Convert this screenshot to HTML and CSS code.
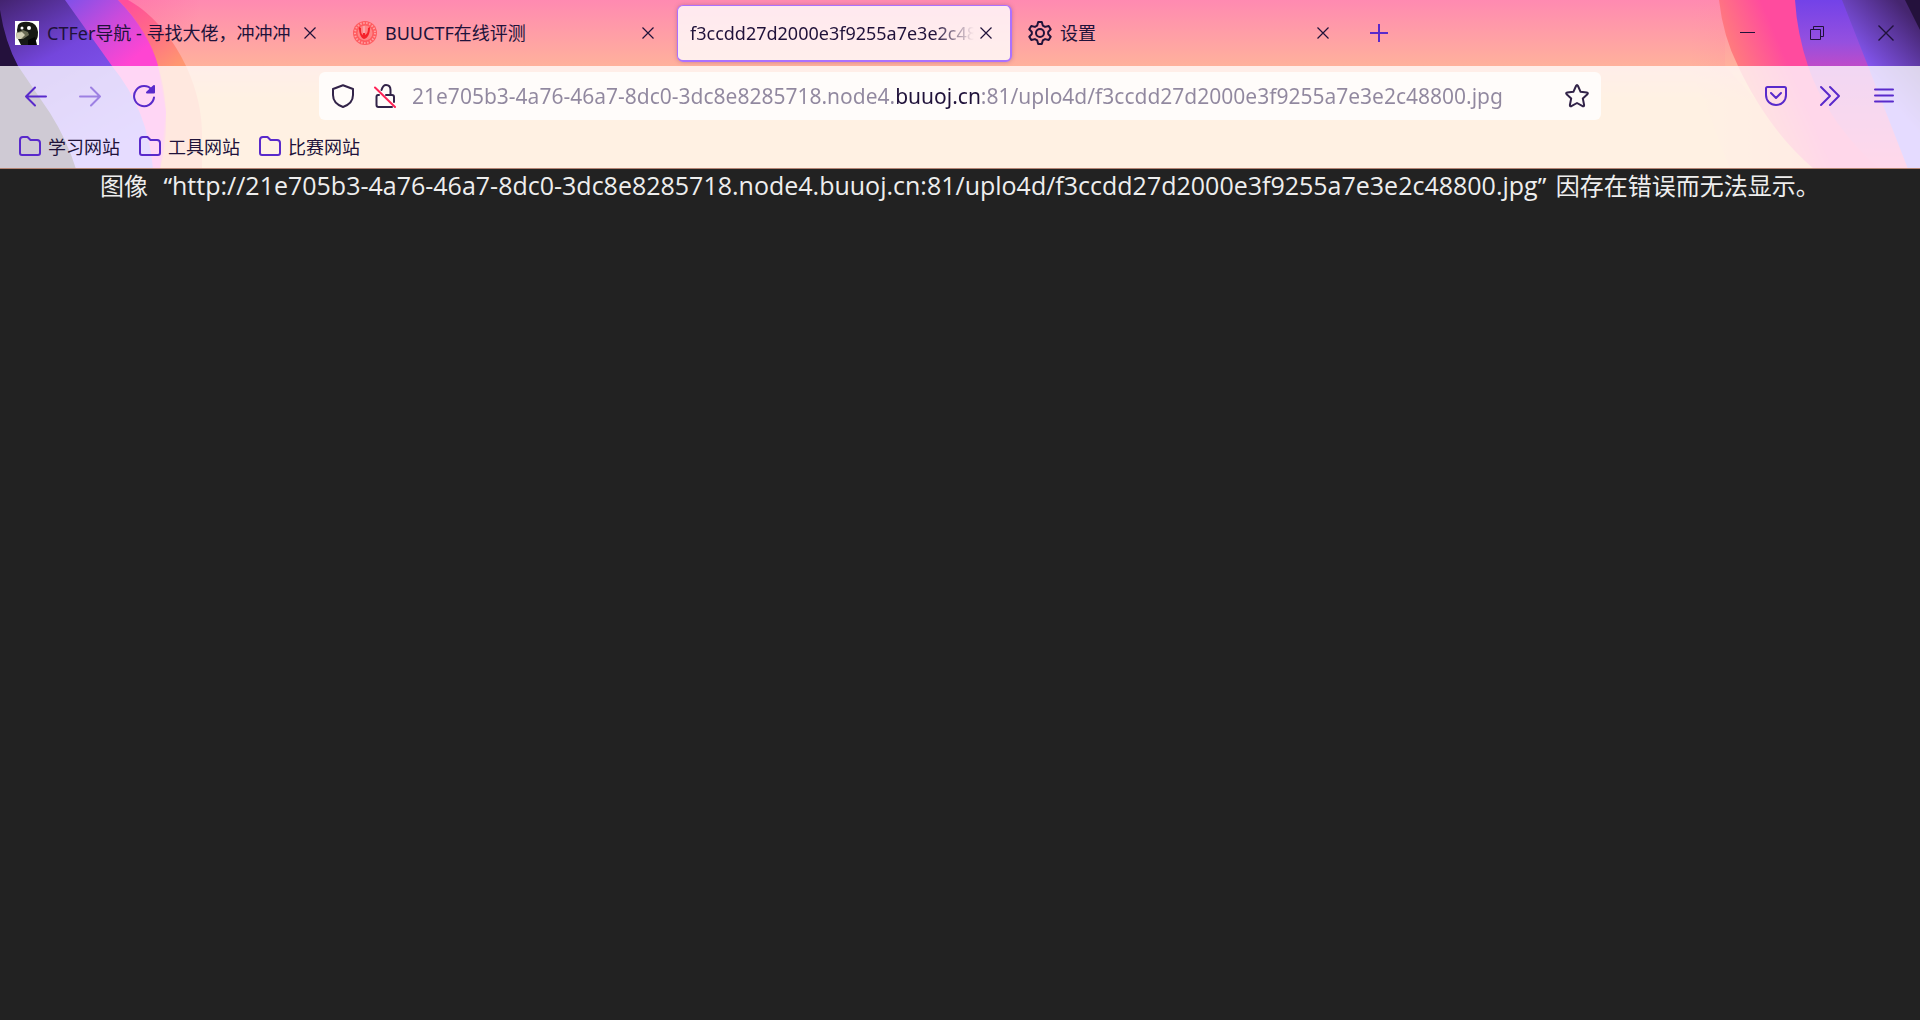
FILE: index.html
```html
<!DOCTYPE html>
<html lang="zh-CN">
<head>
<meta charset="utf-8">
<title>f3ccdd27d2000e3f9255a7e3e2c48800.jpg</title>
<link rel="stylesheet" href="styles.css">
</head>
<body>
<header class="chrome">
  <svg class="art art-left" viewBox="0 0 280 169" aria-hidden="true">
    <defs>
      <linearGradient id="lv" x1="0" y1="0" x2=".5" y2="1"><stop offset="0" stop-color="#43236f"/><stop offset=".4" stop-color="#7446dc"/><stop offset="1" stop-color="#8c62ff"/></linearGradient>
      <linearGradient id="lm" gradientUnits="userSpaceOnUse" x1="70" y1="0" x2="125" y2="66"><stop offset="0" stop-color="#8450e8"/><stop offset=".5" stop-color="#c94bdc"/><stop offset="1" stop-color="#ff45d2"/></linearGradient>
      <linearGradient id="lo" gradientUnits="userSpaceOnUse" x1="130" y1="0" x2="175" y2="66"><stop offset="0" stop-color="#ff4f9b"/><stop offset=".5" stop-color="#ff6c86"/><stop offset="1" stop-color="#ff9670"/></linearGradient>
      <linearGradient id="lf"><stop offset="0" stop-color="#ff4f9b"/><stop offset="1" stop-color="#ff4f9b" stop-opacity="0"/></linearGradient>
    </defs>
    <path fill="url(#lf)" d="M118 0H200V35H150Z" opacity=".3"/>
    <path fill="url(#lo)" d="M0 0H128C165 20 202 75 202 135V169H0Z"/>
    <path fill="#ff60a5" d="M0 0H118C148 28 166 72 166 120Q166 146 160 169H0Z"/>
    <path fill="url(#lm)" d="M0 0H118C138 20 153 45 158 66L166 112 160 169H0Z"/>
    <path fill="url(#lv)" d="M0 0H65L112 66Q148 110 153 169H0Z"/>
    <path fill="#24113c" d="M0 10Q5 42 18 66L50 113Q67 140 76 169H0Z"/>
  </svg>
  <svg class="art art-right" viewBox="0 0 280 169" aria-hidden="true">
    <defs>
      <linearGradient id="rp" gradientUnits="userSpaceOnUse" x1="80" y1="40" x2="150" y2="10"><stop offset="0" stop-color="#ff8179"/><stop offset=".7" stop-color="#ff4b9e"/></linearGradient>
      <linearGradient id="rb" x1="0" y1="0" x2="0" y2="1"><stop offset="0" stop-color="#7342e8"/><stop offset=".25" stop-color="#9550df"/><stop offset=".4" stop-color="#c04bc8"/><stop offset="1" stop-color="#ff50a0"/></linearGradient>
      <linearGradient id="rv" gradientUnits="userSpaceOnUse" x1="220" y1="70" x2="275" y2="20"><stop offset="0" stop-color="#8b5cff"/><stop offset="1" stop-color="#45256f"/></linearGradient>
      <linearGradient id="rf"><stop offset="0" stop-color="#ff8aa8" stop-opacity="0"/><stop offset="1" stop-color="#ff8a80"/></linearGradient>
    </defs>
    <path fill="url(#rf)" d="M50 0H85V66L180 169H90L50 66Z" opacity=".5"/>
    <path fill="url(#rp)" d="M79 0Q83 36 98 66C116 104 140 140 174 169H280V0Z"/>
    <path fill="url(#rb)" d="M155 0Q157 33 168 66C180 102 207 142 240 169H280V0Z"/>
    <path fill="url(#rv)" d="M202 0L228 66 268 169H280V0Z"/>
    <path fill="#24113c" d="M265 0L280 30V0Z"/>
  </svg>

  <div class="tabstrip">
    <div class="tab">
      <svg class="favicon" viewBox="0 0 24 24"><path fill="#fff" d="M0 0h24v24H0z"/><path fill="#171914" d="M3 4Q6 0 14 1q8 1 9 10 0 8-3 9v4H6l-3-6L2 9Z"/><path fill="#6a6b55" d="M1 12l7-3 5 2 1 3-6 4H2Z"/><path fill="#d1ceb4" d="M1 12l6-1 3 3-4 4H2Z"/><circle cx="7" cy="7" r="1.5" fill="#fff"/><circle cx="14" cy="7" r="2" fill="#fff"/><circle cx="14" cy="7" r=".8"/><path d="M13 19l7-3 2 8h-9z" fill="#050505"/></svg>
      <button class="tab-label">CTFer导航 - 寻找大佬，冲冲冲</button>
      <button class="tab-close" aria-label="关闭标签页"><svg viewBox="0 0 12 12"><path d="M.5.5l11 11m0-11l-11 11"/></svg></button>
    </div>
    <div class="tab">
      <svg class="favicon" viewBox="0 0 24 24"><circle cx="12" cy="12" r="12" fill="#ff5b5f"/><circle cx="12" cy="12" r="10" fill="none" stroke="#ff9da0" stroke-width="2" stroke-dasharray="1.5 1.5"/><circle cx="12" cy="12" r="7.5" fill="#ff8486"/><path d="M6 6c0 7 2 11 5 12 4-1 6-5 6-12l-2 1c0 4-1 6-3 7V5h-2v9c-2-1-2-3-2-7Z" fill="#f5222b"/><path d="M11 5v7" stroke="#fff" stroke-width="1.2"/></svg>
      <button class="tab-label">BUUCTF在线评测</button>
      <button class="tab-close" aria-label="关闭标签页"><svg viewBox="0 0 12 12"><path d="M.5.5l11 11m0-11l-11 11"/></svg></button>
    </div>
    <div class="tab active">
      <button class="tab-label faded">f3ccdd27d2000e3f9255a7e3e2c48800.jpg</button>
      <button class="tab-close" aria-label="关闭标签页"><svg viewBox="0 0 12 12"><path d="M.5.5l11 11m0-11l-11 11"/></svg></button>
    </div>
    <div class="tab">
      <svg class="favicon line" viewBox="0 0 24 24"><circle cx="12" cy="12" r="4"/><path d="M10.2 1h3.6l1 3.600 2.300 1.300 3.600-.9 2 3.200-2.500 2.700v2.200l2.500 2.700-2 3.200-3.600-.9-2.300 1.300-1 3.600h-3.600l-1-3.600-2.300-1.300-3.600.9-2-3.200 2.500-2.700v-2.200L1.300 8.200l2-3.200 3.600.9 2.300-1.300Z"/></svg>
      <button class="tab-label">设置</button>
      <button class="tab-close" aria-label="关闭标签页"><svg viewBox="0 0 12 12"><path d="M.5.5l11 11m0-11l-11 11"/></svg></button>
    </div>
    <button class="new-tab" aria-label="新建标签页"><svg viewBox="0 0 18 18"><path d="M9 0v18M0 9h18"/></svg></button>
    <div class="window-buttons">
      <button aria-label="最小化"><svg viewBox="0 0 16 16"><path d="M0 7.500h15"/></svg></button>
      <button aria-label="还原"><svg viewBox="0 0 16 16"><path d="M1.500 4.500h10v10h-10zM4.500 4V1.500h10v10H12"/></svg></button>
      <button aria-label="关闭"><svg viewBox="0 0 16 16"><path stroke-width="1.400" d="M.5.5l15 15m0-15l-15 15"/></svg></button>
    </div>
  </div>

  <div class="panel">
    <nav class="toolbar" aria-label="导航">
      <button class="tool" aria-label="后退"><svg viewBox="0 0 24 24"><path d="M22 12.500H2m9-9l-9 9 9 9"/></svg></button>
      <button class="tool" aria-label="前进" disabled><svg viewBox="0 0 24 24"><path d="M2 12.500h20m-9-9l9 9-9 9"/></svg></button>
      <button class="tool" aria-label="重新载入"><svg viewBox="0 0 24 24"><path d="M20 6A10 10 0 1 0 22 13.500"/><path class="solid" d="M22 2v6.500h-7z"/></svg></button>
      <div class="urlbar">
        <svg class="url-icon" viewBox="0 0 24 24"><path d="M12 1.200L22 5v6c0 6-4.500 10-10 12C6.500 21 2 17 2 11V5Z"/></svg>
        <svg class="url-icon" viewBox="0 0 24 24"><path d="M8.500 6Q10 1 13 1c3 0 4.500 2 4.500 5v5H19q2 0 2 2v5M13 11h3M6 11H5q-1.500 0-1.500 2v8q0 2 2 2H19"/><path class="strike" d="M2 3.500L22 23"/></svg>
        <input class="url" type="text" aria-label="地址" value="21e705b3-4a76-46a7-8dc0-3dc8e8285718.node4.buuoj.cn:81/uplo4d/f3ccdd27d2000e3f9255a7e3e2c48800.jpg">
        <button class="star" aria-label="添加书签"><svg class="url-icon" viewBox="0 0 24 24"><path d="M11 2q1-2 2 0l2.600 5.800 6.200.7q1.700.3.600 1.700l-4.600 4.200 1.300 6.600q.1 1.700-1.500 1.200L12 19l-5.600 3.200q-1.600.5-1.500-1.200l1.300-6.600-4.600-4.200q-1.100-1.400.6-1.700l6.200-.7Z"/></svg></button>
      </div>
      <button class="tool" aria-label="Pocket"><svg viewBox="0 0 24 24"><path d="M3.500 3h17q1.500 0 1.500 1.500V11c0 6-4.500 10-10 10S2 17 2 11V4.500Q2 3 3.500 3ZM7 9l5 5 5-5"/></svg></button>
      <button class="tool" aria-label="更多工具"><svg viewBox="0 0 24 24"><path d="M3 3l9 9-9 9m9-18l9 9-9 9"/></svg></button>
      <button class="tool" aria-label="菜单"><svg viewBox="0 0 24 24"><path d="M3 5.500h18M3 11.500h18M3 17.500h18"/></svg></button>
    </nav>
    <nav class="bookmarks" aria-label="书签">
      <button><svg viewBox="0 0 24 24"><path d="M2 19V6q0-3 3-3h4.500l3 3H19q3 0 3 3v10q0 2-2 2H4q-2 0-2-2Z"/></svg>学习网站</button>
      <button><svg viewBox="0 0 24 24"><path d="M2 19V6q0-3 3-3h4.500l3 3H19q3 0 3 3v10q0 2-2 2H4q-2 0-2-2Z"/></svg>工具网站</button>
      <button><svg viewBox="0 0 24 24"><path d="M2 19V6q0-3 3-3h4.500l3 3H19q3 0 3 3v10q0 2-2 2H4q-2 0-2-2Z"/></svg>比赛网站</button>
    </nav>
  </div>
</header>
<main class="content">
  <p class="message">图像<span class="quote">“</span><span class="address">http://21e705b3-4a76-46a7-8dc0-3dc8e8285718.node4.buuoj.cn:81/uplo4d/f3ccdd27d2000e3f9255a7e3e2c48800.jpg</span><span class="quote end">”</span>因存在错误而无法显示。</p>
</main>
</body>
</html>
```
FILE: styles.css
```css
* { box-sizing: border-box; }
body {
  margin: 0;
  min-height: 100vh;
  display: flex;
  flex-direction: column;
  background: #222;
  color: #20123a;
  font-family: "Noto Sans", "Noto Sans CJK SC", sans-serif;
  font-size: 18px;
}
button, input { font: inherit; color: inherit; border: 0; padding: 0; background: none; }
button { cursor: default; }
svg { flex: none; fill: none; }
.chrome {
  position: relative;
  background: linear-gradient(#ff8ab1, #ffb19c 66px, #ffc080 100px, #ffc080);
}
.art { position: absolute; top: 0; width: 280px; height: 169px; }
.art-left { left: 0; }
.art-right { right: 0; }

.tabstrip { position: relative; display: flex; height: 66px; }
.tab {
  flex: 0 1 338px;
  min-width: 0;
  display: flex;
  align-items: center;
  padding: 0 16px 0 15px;
}
.favicon { width: 24px; height: 24px; margin-right: 8px; }
.line { stroke: #20123a; stroke-width: 2; stroke-linejoin: round; }
.tab-label {
  flex: 1;
  min-width: 0;
  height: 32px;
  line-height: 32px;
  overflow: hidden;
  white-space: nowrap;
  text-align: left;
}
.faded {
  -webkit-mask-image: linear-gradient(90deg, #000 calc(100% - 40px), transparent);
  mask-image: linear-gradient(90deg, #000 calc(100% - 40px), transparent);
}
.active {
  flex-basis: 335px;
  margin: 5px 1px 4px;
  padding: 0 12px;
  border: 1px solid #ab71ff;
  border-right-width: 2px;
  border-bottom-width: 2px;
  border-radius: 6px;
  background: rgba(255, 255, 255, .8);
  box-shadow: 0 0 4px rgba(120, 60, 120, .4);
}
.tab-close { width: 24px; height: 24px; display: grid; place-items: center; }
.tab-close svg { width: 12px; height: 12px; stroke: #20123a; stroke-width: 1.2; }
.new-tab { width: 56px; display: grid; place-items: center; }
.new-tab svg { width: 18px; height: 18px; stroke: #592acb; stroke-width: 2; }
.window-buttons { margin-left: auto; display: flex; }
.window-buttons button { width: 69px; display: grid; place-items: center; }
.window-buttons svg { width: 16px; height: 16px; stroke: #20123a; }

.panel {
  position: relative;
  background: rgba(255, 255, 255, .78);
  border-bottom: 1px solid #b48473;
}
.toolbar { display: flex; align-items: center; height: 60px; padding: 0 9px; }
.tool { width: 54px; height: 48px; display: grid; place-items: center; }
.tool svg, .bookmarks svg {
  width: 24px;
  height: 24px;
  stroke: #592acb;
  stroke-width: 2;
  stroke-linecap: round;
  stroke-linejoin: round;
}
.tool:disabled { opacity: .5; }
.solid { fill: #592acb; }
.urlbar {
  flex: 1;
  min-width: 0;
  height: 48px;
  margin: 0 148px;
  padding: 0 12px;
  display: flex;
  align-items: center;
  gap: 18px;
  border-radius: 6px;
  background: #fffcfa;
}
.url-icon {
  display: block;
  width: 24px;
  height: 24px;
  stroke: #322348;
  stroke-width: 2;
  stroke-linejoin: round;
  stroke-linecap: round;
}
.strike { stroke: #ff2457; }
/* The registered domain is drawn darker than the rest of the address. */
.url {
  flex: 1;
  min-width: 0;
  height: 40px;
  margin-left: -3px;
  font-size: 21px;
  color: transparent;
  background: linear-gradient(90deg, #91889f 484px, #20123a 484px, #20123a 569px, #91889f 569px);
  -webkit-background-clip: text;
  background-clip: text;
  caret-color: #20123a;
}
.bookmarks { display: flex; height: 42px; padding: 0 18px 2px; gap: 18px; }
.bookmarks button { display: flex; align-items: center; gap: 6px; }

.content { flex: 1; color: #eee; }
.message { margin: 0 100px; font-size: 24px; line-height: 32px; white-space: nowrap; }
.address { font-family: "Open Sans", sans-serif; font-size: 25px; }
.quote { display: inline-block; width: 24px; text-align: right; }
.end { width: 18px; text-align: left; }
```
